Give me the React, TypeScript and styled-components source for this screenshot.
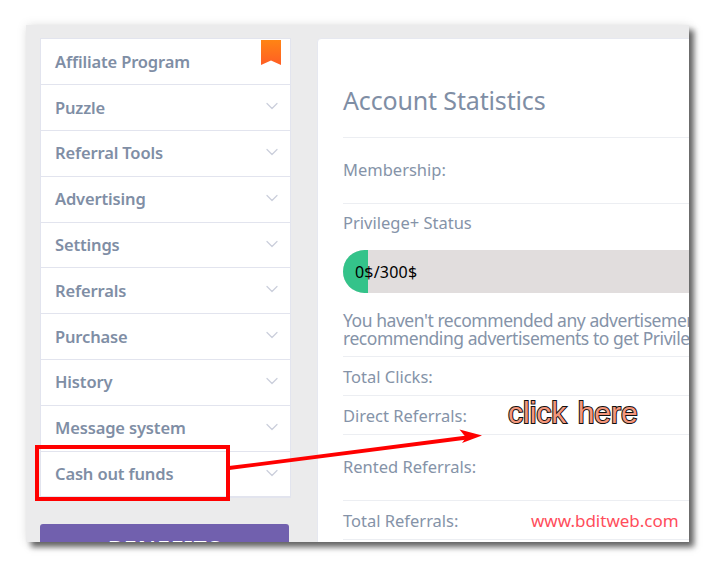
import React from 'react';
import styled, { createGlobalStyle } from 'styled-components';
import { ChevronDown } from 'lucide-react';

const menu = [
  'Puzzle',
  'Referral Tools',
  'Advertising',
  'Settings',
  'Referrals',
  'Purchase',
  'History',
  'Message system',
  'Cash out funds',
];

const GlobalStyle = createGlobalStyle`
  html, body {
    margin: 0;
    padding: 0;
    background: #fff;
  }
  body {
    font-family: "Noto Sans", "Open Sans", sans-serif;
  }
`;

const Stage = styled.div`
  position: relative;
  width: 714px;
  height: 567px;
  overflow: hidden;
  padding: 25px 0 0 26px;
  box-sizing: border-box;
`;

const ShotShadow = styled.div`
  box-shadow: 5px 5px 6px rgba(0, 0, 0, 0.6), 0 0 10px rgba(0, 0, 0, 0.1);
  width: 663px;
  height: 517px;
`;

const Shot = styled.div`
  position: relative;
  display: flex;
  align-items: flex-start;
  gap: 26px;
  width: 663px;
  height: 517px;
  box-sizing: border-box;
  padding: 13px 0 0 14px;
  background: #ebebec;
  overflow: hidden;
`;

const Sidebar = styled.div`
  flex: 0 0 251px;
  display: flex;
  flex-direction: column;
  gap: 25.5px;
`;

const Menu = styled.ul`
  list-style: none;
  margin: 0;
  padding: 0;
  background: #fff;
  border: 1px solid #e2e4ee;
  border-bottom-width: 2px;
  display: flex;
  flex-direction: column;
`;

const MenuItem = styled.li`
  position: relative;
  height: 45.8px;
  box-sizing: border-box;
  display: flex;
  align-items: center;
  justify-content: space-between;
  padding: 0 8px 1px 14px;
  border-top: 1px solid #e2e4ee;
  color: #7f8ea5;
  font-size: 16.5px;
  font-weight: 600;
  letter-spacing: -0.15px;
  &:first-child {
    height: 45.3px;
    border-top: 0;
  }
`;

const Chevron = styled(ChevronDown)`
  color: #cbcfdc;
  margin-top: -2px;
`;

const Bookmark = styled.svg`
  position: absolute;
  top: 1px;
  right: 9px;
`;

const Benefits = styled.div`
  width: 249px;
  height: 60px;
  background: #7160ae;
  border-radius: 3px 3px 0 0;
  color: #fff;
  font-size: 23px;
  font-weight: 600;
  text-align: center;
  line-height: 51px;
  letter-spacing: 1px;
`;

const Card = styled.div`
  flex: 0 0 520px;
  box-sizing: border-box;
  height: 520px;
  background: #fff;
  border: 1px solid #e6e8f0;
  border-radius: 4px 0 0 0;
  padding: 0 0 0 25px;
  display: flex;
  flex-direction: column;
  overflow: hidden;
`;

const Title = styled.h2`
  margin: 0;
  height: 99px;
  flex: none;
  display: flex;
  align-items: center;
  padding: 23px 0 0 0;
  box-sizing: border-box;
  font-size: 25px;
  font-weight: 400;
  letter-spacing: -0.15px;
  color: #7f8ea5;
  border-bottom: 1px solid #eceef2;
`;

const Row = styled.div<{ $h: number; $lift?: number }>`
  flex: none;
  height: ${(p) => p.$h}px;
  box-sizing: border-box;
  padding-bottom: ${(p) => p.$lift ?? 0}px;
  display: flex;
  align-items: center;
  color: #8593a8;
  font-size: 16.5px;
  letter-spacing: 0;
  border-bottom: 1px solid #eceef2;
  white-space: nowrap;
`;

const StatusLabel = styled.div`
  flex: none;
  height: 39px;
  box-sizing: border-box;
  padding-bottom: 2px;
  display: flex;
  align-items: center;
  color: #8593a8;
  font-size: 16.5px;
`;

const Bar = styled.div`
  flex: none;
  display: flex;
  align-items: center;
  position: relative;
  height: 43px;
  margin-top: 7px;
  background: #e1dddd;
  border-radius: 22px 0 0 22px;
  overflow: hidden;
`;

const BarFill = styled.div`
  width: 25px;
  height: 100%;
  background: #34c38a;
`;

const BarText = styled.span`
  position: absolute;
  left: 12px;
  font-size: 16px;
  letter-spacing: 0.2px;
  color: #000;
`;

const Note = styled.div`
  flex: 0 0 64px;
  box-sizing: border-box;
  padding-top: 18px;
  color: #8593a8;
  font-size: 17.5px;
  line-height: 18px;
  letter-spacing: -0.45px;
  white-space: nowrap;
  border-bottom: 1px solid #eceef2;
`;

const Highlight = styled.div`
  position: absolute;
  left: 9px;
  top: 420px;
  width: 195px;
  height: 56px;
  box-sizing: border-box;
  border: 4px solid #f00;
`;

const Arrow = styled.svg`
  position: absolute;
  left: 200px;
  top: 400px;
`;

const ClickHere = styled.div`
  position: absolute;
  left: 482px;
  top: 370px;
  font-family: "Liberation Sans", Arial, sans-serif;
  font-size: 30px;
  line-height: 36px;
  word-spacing: 3px;
  letter-spacing: 0;
  color: #f4977c;
  -webkit-text-stroke: 2px #111;
  paint-order: stroke fill;
  white-space: nowrap;
`;

const Watermark = styled.div`
  position: absolute;
  left: 505px;
  top: 484px;
  font-family: "Noto Sans", sans-serif;
  font-size: 17px;
  line-height: 24px;
  color: #ff4d5b;
  white-space: nowrap;
`;

export default function App() {
  return (
    <Stage>
      <GlobalStyle />
      <ShotShadow>
        <Shot>
          <Sidebar>
            <Menu>
              <MenuItem>
                Affiliate Program
                <Bookmark width="20" height="25" viewBox="0 0 20 25">
                  <defs>
                    <linearGradient id="ribbon" x1="0" y1="0" x2="0" y2="1">
                      <stop offset="0" stopColor="#ff8414" />
                      <stop offset="1" stopColor="#ff5e25" />
                    </linearGradient>
                  </defs>
                  <path d="M0 0H20V25L10 20.5L0 25Z" fill="url(#ribbon)" />
                </Bookmark>
              </MenuItem>
              {menu.map((label) => (
                <MenuItem key={label}>
                  {label}
                  <Chevron size={20} strokeWidth={1.5} />
                </MenuItem>
              ))}
            </Menu>
            <Benefits>BENEFITS</Benefits>
          </Sidebar>
          <Card>
            <Title>Account Statistics</Title>
            <Row $h={66} $lift={2}>Membership:</Row>
            <StatusLabel>Privilege+ Status</StatusLabel>
            <Bar>
              <BarFill />
              <BarText>0$/300$</BarText>
            </Bar>
            <Note>
              You haven't recommended any advertisements yet. Start
              <br />
              recommending advertisements to get Privilege+ status
            </Note>
            <Row $h={39}>Total Clicks:</Row>
            <Row $h={39}>Direct Referrals:</Row>
            <Row $h={66} $lift={2}>Rented Referrals:</Row>
            <Row $h={39}>Total Referrals:</Row>
          </Card>
          <Highlight />
          <Arrow width="270" height="60" viewBox="0 0 270 60">
            <path d="M3 43L245 12" stroke="#f00" strokeWidth="3.8" fill="none" />
            <path d="M256 10.500L233.500 4.500L240 12.500L236 18Z" fill="#f00" />
          </Arrow>
          <ClickHere>click here</ClickHere>
          <Watermark>www.bditweb.com</Watermark>
        </Shot>
      </ShotShadow>
    </Stage>
  );
}
